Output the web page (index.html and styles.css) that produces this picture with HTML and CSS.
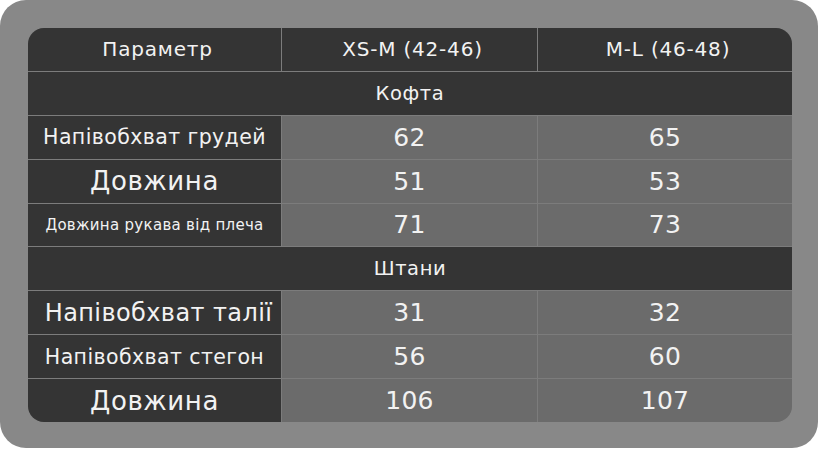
FILE: index.html
```html
<!DOCTYPE html>
<html lang="uk">
<head>
<meta charset="utf-8">
<title>Розмірна сітка</title>
<link rel="stylesheet" href="styles.css">
</head>
<body>
<div class="frame">
  <div class="sheet">
    <div class="cell head">Параметр</div>
    <div class="cell head">XS-M (42-46)</div>
    <div class="cell head">M-L (46-48)</div>

    <div class="cell section">Кофта</div>

    <div class="cell label l-md">Напівобхват грудей</div>
    <div class="cell val">62</div>
    <div class="cell val">65</div>

    <div class="cell label l-xl">Довжина</div>
    <div class="cell val">51</div>
    <div class="cell val">53</div>

    <div class="cell label l-sm">Довжина рукава від плеча</div>
    <div class="cell val">71</div>
    <div class="cell val">73</div>

    <div class="cell section">Штани</div>

    <div class="cell label l-lg">Напівобхват талії</div>
    <div class="cell val">31</div>
    <div class="cell val">32</div>

    <div class="cell label l-md">Напівобхват стегон</div>
    <div class="cell val">56</div>
    <div class="cell val">60</div>

    <div class="cell label l-xl">Довжина</div>
    <div class="cell val">106</div>
    <div class="cell val">107</div>
  </div>
</div>
</body>
</html>
```

FILE: styles.css
```css
html, body {
  margin: 0;
  padding: 0;
  background: #ffffff;
}

.frame {
  box-sizing: border-box;
  width: 818px;
  height: 448px;
  padding: 28px 26px 26px 28px;
  background: #888888;
  border-radius: 26px;
}

.sheet {
  width: 764px;
  height: 394px;
  display: grid;
  grid-template-columns: 253px 255px 254px;
  grid-template-rows: repeat(9, 1fr);
  gap: 1px;
  background: #7c7c7c;
  border-radius: 16px;
  overflow: hidden;
  font-family: "DejaVu Sans", "Liberation Sans", sans-serif;
  color: #f2f2f2;
}

.cell {
  display: flex;
  align-items: center;
  justify-content: center;
  white-space: nowrap;
  background: #343434;
}

.head {
  font-size: 20px;
  letter-spacing: 0.8px;
  padding-left: 6px;
}

.section {
  grid-column: 1 / -1;
  font-size: 19.5px;
  letter-spacing: 0.6px;
}

.val {
  background: #6b6b6b;
  font-size: 25px;
  letter-spacing: 0.3px;
}

.label.l-sm { font-size: 15px; letter-spacing: 0.3px; }
.label.l-md { font-size: 20.5px; letter-spacing: 0.4px; }
.label.l-lg { font-size: 24px; letter-spacing: 0.4px; padding-left: 8px; }
.label.l-xl { font-size: 26px; letter-spacing: 0.6px; }
```
